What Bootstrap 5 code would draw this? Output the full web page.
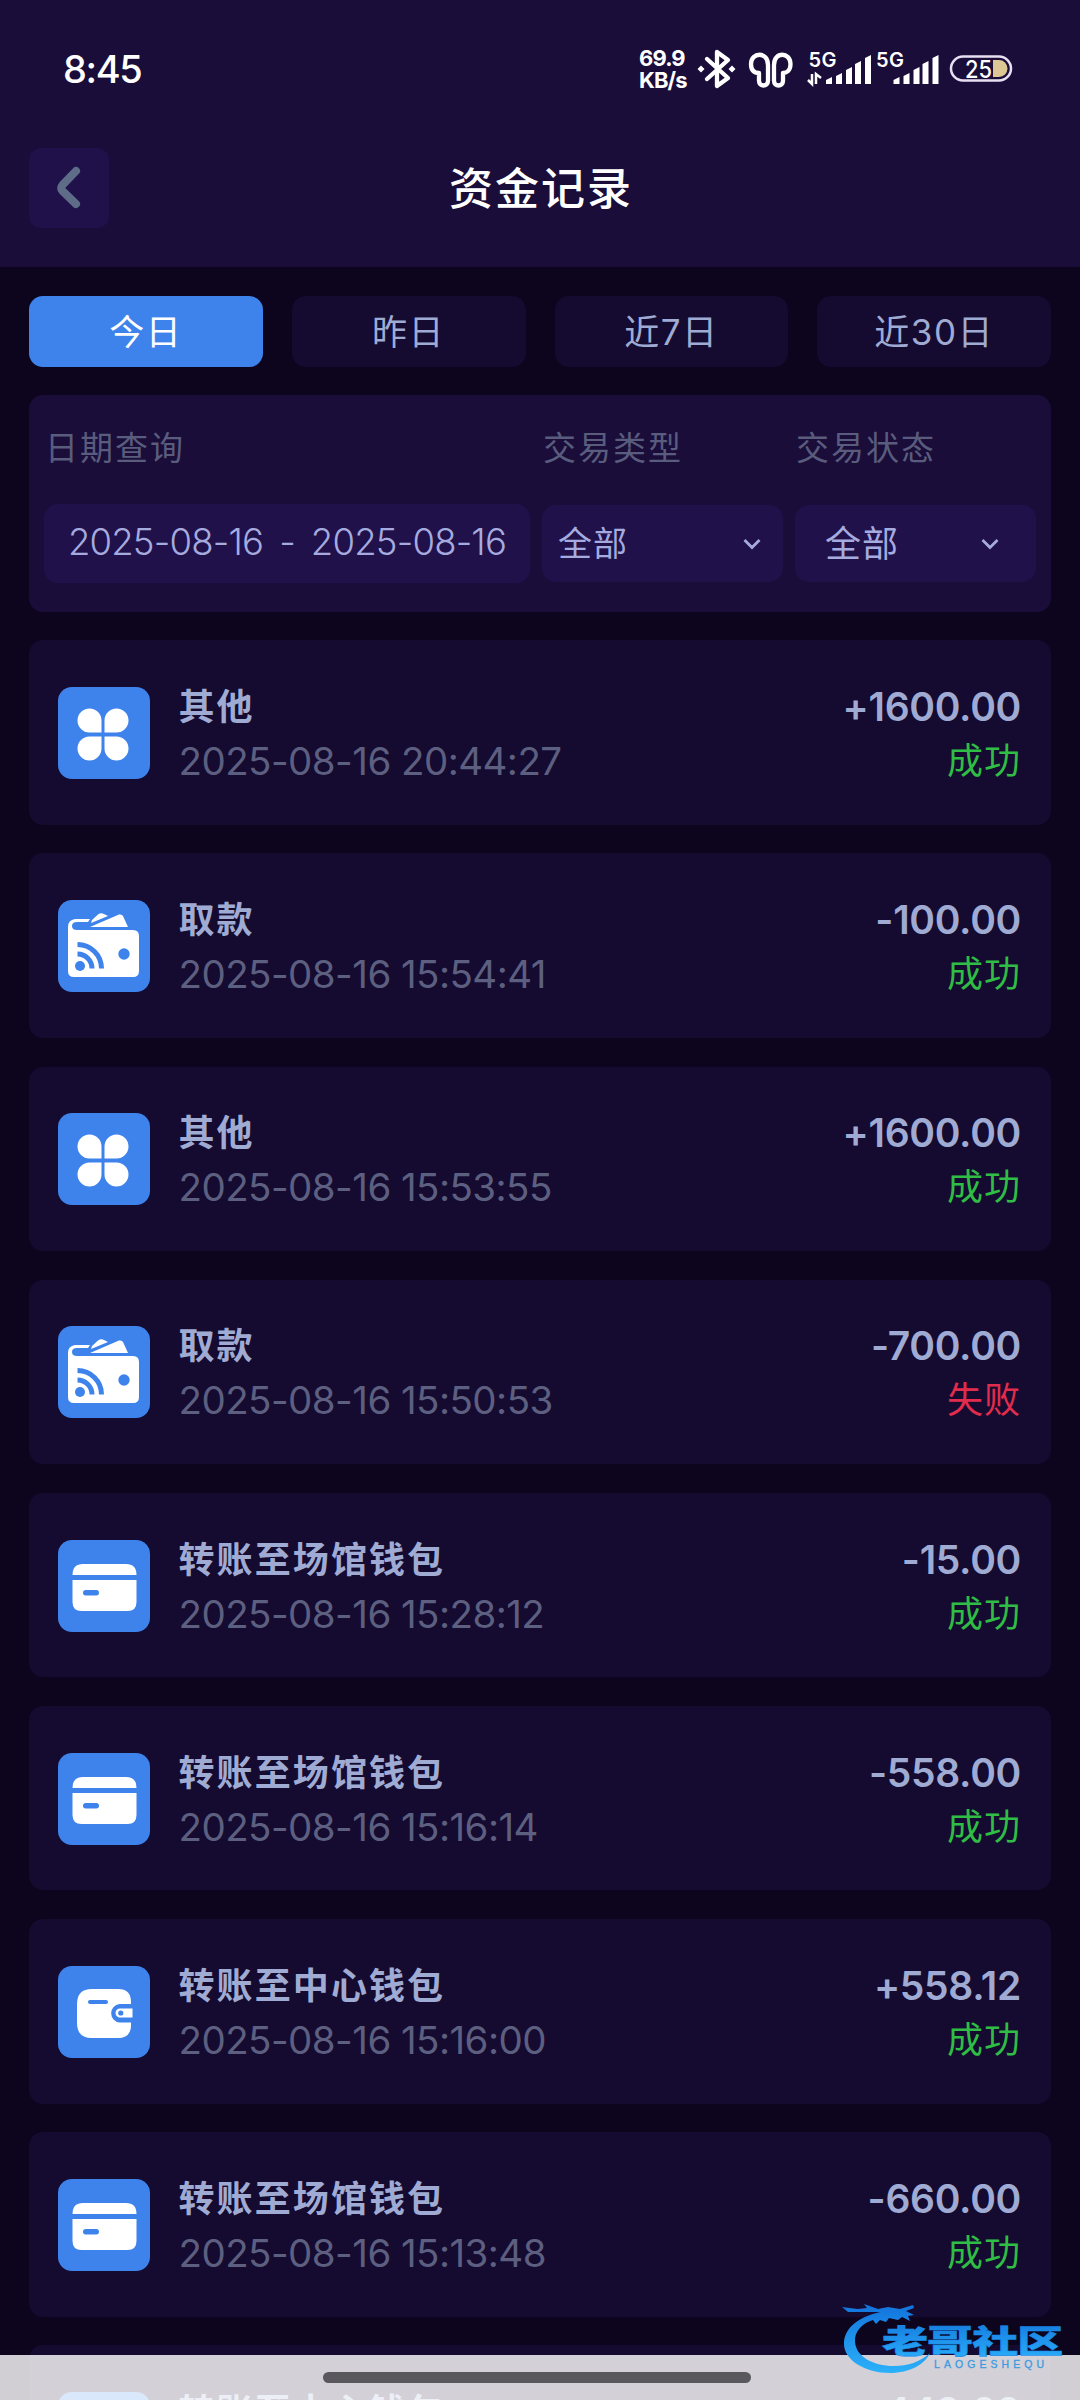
<!DOCTYPE html>
<html lang="zh-CN">
<head>
<meta charset="utf-8">
<meta name="viewport" content="width=device-width, initial-scale=1">
<title>资金记录</title>
<link href="https://cdn.jsdelivr.net/npm/bootstrap@5.3.0/dist/css/bootstrap.min.css" rel="stylesheet">
<style>
  html, body { height: 2400px; overflow: hidden; }
  body { background: #0c051d; color: #9fabd3; font-family: Inter, "Noto Sans CJK SC", sans-serif; font-size: 36px; line-height: 1; }
  .screen { width: 1080px; height: 2400px; }
  .top-area { background: #1a0d39; height: 267px; }
  .status-line { height: 138px; padding: 0 57px 0 63px; color: #fff; }
  .clock { font-size: 38px; font-weight: 500; letter-spacing: -1.4px; }
  .net-speed { font-size: 22px; line-height: 22px; font-weight: 700; letter-spacing: -.9px; width: 48px; margin-right: 8px; }
  .title-line { height: 100px; padding: 0 29px; }
  .back-btn { width: 80px; height: 80px; border-radius: 12px; background: #20114b; border: 0; left: 29px; }
  .page-title { font-size: 44px; font-weight: 500; letter-spacing: 2px; color: #fff; padding: 3px 0 0 2px; }
  .main-area { padding: 29px 29px 0; }
  .tab-btn { height: 71px; border-radius: 14px; background: #150a2f; color: #9fabd3; font-size: 35px; letter-spacing: 1.5px; flex: 1 1 0; border: 0; padding: 1px 0 0; font-weight: 400; line-height: 71px; }
  .tab-btn.active { background: #3e83ec; color: #fff; }
  .day-tabs { gap: 29px; }
  .filter-card { margin-top: 28px; height: 217px; border-radius: 14px; background: #1a0d39; padding: 37px 14px 0 15px; gap: 12px; }
  .f-label { font-size: 33px; letter-spacing: 2px; color: #595c7d; height: 33px; padding-left: 1px; }
  .f-box { margin-top: 40px; height: 77px; background: #20114b; border-radius: 14px; color: #a5abdf; font-size: 34px; letter-spacing: 1px; }
  .f-range { margin-top: 39px; height: 79px; font-size: 36.5px; font-weight: 350; letter-spacing: -.8px; gap: 16px; padding-bottom: 2px; }
  .f-date { width: 486px; }
  .f-sel { width: 241px; }
  .sel-type { padding: 0 22px 0 16px; }
  .sel-state { padding: 0 37px 0 30px; font-size: 36px; }
  .records { margin-top: 28.4px; gap: 28.5px; }
  .rec { height: 184.6px; flex: none; border-radius: 14px; background: #150a2f; padding: 1px 30px 0 28.5px; }
  .rec-icon { width: 92px; height: 92px; flex: none; }
  .rec-body { margin-left: 29px; padding-top: 2px; }
  .rec-name { font-size: 36px; font-weight: 600; letter-spacing: 2.1px; height: 54px; line-height: 55px; }
  .rec-time { font-size: 38.500px; font-weight: 370; height: 54px; line-height: 54px; color: #5c5f80; letter-spacing: -.55px; }
  .rec-side { padding-top: 2px; }
  .rec-sum { font-size: 39px; font-weight: 600; height: 54px; line-height: 54px; letter-spacing: -.3px; }
  .rec-state { font-size: 36px; letter-spacing: 1px; height: 54px; line-height: 54px; }
  .ok { color: #2fbd45; }
  .bad { color: #e22c4d; }
  .nav-veil { left: 0; top: 2355px; width: 1080px; height: 45px; background: rgba(255,255,255,.81); }
  .nav-pill { width: 428px; height: 11px; border-radius: 6px; background: #59585d; margin: 17px 0 0 323px; }
  .stamp { left: 840px; top: 2298px; }
</style>
<script src="https://cdn.jsdelivr.net/npm/bootstrap@5.3.0/dist/js/bootstrap.bundle.min.js"></script>
</head>
<body>
<svg class="position-absolute" width="0" height="0" xmlns="http://www.w3.org/2000/svg">
  <symbol id="i-clover" viewBox="0 0 92 92"><rect width="92" height="92" rx="14" fill="#3e83ec"/><path fill="#fff" d="M31.500 21.500a12 12 0 0 1 12 12V45.500H31.500a12 12 0 0 1 0-24ZM58.500 21.500a12 12 0 0 1 0 24H46.500V33.500a12 12 0 0 1 12-12ZM31.500 49.500H43.500V61.500a12 12 0 1 1-12-12ZM46.500 49.500H58.500a12 12 0 1 1-12 12Z"/></symbol>
  <symbol id="i-draw" viewBox="0 0 92 92"><rect width="92" height="92" rx="14" fill="#3e83ec"/><path fill="#fff" d="M18 30H75Q81 30 81 36V71Q81 77 75 77H16Q10 77 10 71V27Q10 20 17 19H32L30 22H19Q14 22 14 26 14 30 19 30Z"/><path fill="#fff" d="M32 27 61 14.500Q64 14 65 16L70 27ZM34 20 40 14.500Q43 12.500 46 14L50 16 33 23Z"/><g fill="none" stroke="#3e83ec" stroke-width="5"><path d="M19.500 44.500A24 24 0 0 1 43.500 68.500M19.500 54A14.500 14.500 0 0 1 34 68.500"/></g><circle cx="22" cy="66" r="5" fill="#3e83ec"/><circle cx="66" cy="54" r="5.700" fill="#3e83ec"/></symbol>
  <symbol id="i-card" viewBox="0 0 92 92"><rect width="92" height="92" rx="14" fill="#3e83ec"/><path fill="#fff" d="M14.500 35Q14.500 24 25 24H68Q78.500 24 78.500 35ZM14.500 40H78.500V62Q78.500 71 69.500 71H23.500Q14.500 71 14.500 62Z"/><rect x="25" y="50" width="16" height="5.500" rx="2.700" fill="#3e83ec"/></symbol>
  <symbol id="i-purse" viewBox="0 0 92 92"><rect width="92" height="92" rx="14" fill="#3e83ec"/><path fill="#fff" d="M34 23H60Q73 23 73 36V38H61.500A9.300 9.300 0 0 0 61.500 56.500H73V59Q73 72 60 72H34Q19 72 19 57V38Q19 23 34 23ZM62 42.500H74.500V51.500H62A4.500 4.500 0 0 1 62 42.500Z"/><rect x="30" y="34" width="20" height="4" rx="2" fill="#3e83ec"/><circle cx="62.800" cy="47" r="2.600" fill="#3e83ec"/></symbol>
  <symbol id="i-down" viewBox="0 0 18 12"><path d="M1.500 2 9 9.500 16.500 2" fill="none" stroke="#a5abdf" stroke-width="2.800"/></symbol>
</svg>
<div class="screen position-relative overflow-hidden">
  <header class="top-area">
    <div class="status-line d-flex align-items-center justify-content-between">
      <span class="clock">8:45</span>
      <div class="d-flex align-items-center">
        <div class="net-speed">69.9<br>KB/s</div>
        <svg width="328" height="52" viewBox="0 0 328 52">
          <g fill="none" stroke="#fff" stroke-width="4.300" stroke-linejoin="round" stroke-linecap="round">
            <path d="M12 16 33 35 22 43V9L33 17 12 36"/>
            <path d="M73 38V22C73 8 56 9 56 21 56 28 60 30 64 30V38C64 44 73 44 73 38ZM79 38V22C79 8 95.500 9 95.500 21 95.500 28 91 30 88 30V38C88 44 79 44 79 38Z"/>
          </g>
          <path fill="#fff" d="M6 22.500 9.500 26 6 29.500 2.500 26ZM37 22.500 40.500 26 37 29.500 33.500 26Z"/>
          <g fill="#fff" font-family="Inter" font-weight="600" font-size="20"><text x="113.500" y="24" textLength="28">5G</text><text x="181" y="24" textLength="28">5G</text></g>
          <path id="bars" fill="#fff" d="M131 41V37L137 34V41ZM141 41V33L147 30V41ZM151 41V27L157 24V41ZM160 41V21L166 18V41ZM170 41V15L176 12V41Z"/>
          <use href="#bars" x="67.500"/>
          <path d="M117 31V41L113 37M121 41V31L126 35" stroke="#fff" stroke-width="2.500" fill="none"/>
          <rect x="256" y="13.500" width="60" height="24" rx="12" fill="none" stroke="#e7e0f2" stroke-width="2.500"/>
          <path d="M298 17H304A8.500 8.500 0 0 1 304 34H298Z" fill="#dcc795"/>
          <text x="270" y="34.800" fill="#fff" font-family="Inter" font-size="24" font-weight="500" textLength="27" lengthAdjust="spacingAndGlyphs">25</text>
        </svg>
      </div>
    </div>
    <div class="title-line d-flex align-items-center justify-content-center position-relative">
      <button class="btn back-btn p-0 position-absolute" aria-label="返回"><svg width="24" height="44" viewBox="0 0 24 44"><path d="M18 5 4.500 19Q2 22 4.500 25L18 38" transform="translate(1 0)" fill="none" stroke="#5e6c88" stroke-width="8" stroke-linecap="round"/></svg></button>
      <h1 class="page-title m-0">资金记录</h1>
    </div>
  </header>
  <main class="main-area">
    <div class="day-tabs d-flex">
      <button class="btn tab-btn active">今日</button><button class="btn tab-btn">昨日</button><button class="btn tab-btn">近7日</button><button class="btn tab-btn">近30日</button>
    </div>
    <section class="filter-card d-flex">
      <div class="f-date"><div class="f-label">日期查询</div><div class="f-box f-range d-flex align-items-center justify-content-center"><span>2025-08-16</span><span>-</span><span>2025-08-16</span></div></div>
      <div class="f-sel"><div class="f-label">交易类型</div><div class="f-box sel-type d-flex align-items-center justify-content-between"><span>全部</span><svg width="18" height="12"><use href="#i-down"/></svg></div></div>
      <div class="f-sel"><div class="f-label">交易状态</div><div class="f-box sel-state d-flex align-items-center justify-content-between"><span>全部</span><svg width="18" height="12"><use href="#i-down"/></svg></div></div>
    </section>
    <section class="records d-flex flex-column">
      <article class="rec d-flex align-items-center"><svg class="rec-icon"><use href="#i-clover"/></svg><div class="rec-body flex-grow-1"><div class="rec-name">其他</div><div class="rec-time">2025-08-16 20:44:27</div></div><div class="rec-side text-end"><div class="rec-sum">+1600.00</div><div class="rec-state ok">成功</div></div></article>
      <article class="rec d-flex align-items-center"><svg class="rec-icon"><use href="#i-draw"/></svg><div class="rec-body flex-grow-1"><div class="rec-name">取款</div><div class="rec-time">2025-08-16 15:54:41</div></div><div class="rec-side text-end"><div class="rec-sum">-100.00</div><div class="rec-state ok">成功</div></div></article>
      <article class="rec d-flex align-items-center"><svg class="rec-icon"><use href="#i-clover"/></svg><div class="rec-body flex-grow-1"><div class="rec-name">其他</div><div class="rec-time">2025-08-16 15:53:55</div></div><div class="rec-side text-end"><div class="rec-sum">+1600.00</div><div class="rec-state ok">成功</div></div></article>
      <article class="rec d-flex align-items-center"><svg class="rec-icon"><use href="#i-draw"/></svg><div class="rec-body flex-grow-1"><div class="rec-name">取款</div><div class="rec-time">2025-08-16 15:50:53</div></div><div class="rec-side text-end"><div class="rec-sum">-700.00</div><div class="rec-state bad">失败</div></div></article>
      <article class="rec d-flex align-items-center"><svg class="rec-icon"><use href="#i-card"/></svg><div class="rec-body flex-grow-1"><div class="rec-name">转账至场馆钱包</div><div class="rec-time">2025-08-16 15:28:12</div></div><div class="rec-side text-end"><div class="rec-sum">-15.00</div><div class="rec-state ok">成功</div></div></article>
      <article class="rec d-flex align-items-center"><svg class="rec-icon"><use href="#i-card"/></svg><div class="rec-body flex-grow-1"><div class="rec-name">转账至场馆钱包</div><div class="rec-time">2025-08-16 15:16:14</div></div><div class="rec-side text-end"><div class="rec-sum">-558.00</div><div class="rec-state ok">成功</div></div></article>
      <article class="rec d-flex align-items-center"><svg class="rec-icon"><use href="#i-purse"/></svg><div class="rec-body flex-grow-1"><div class="rec-name">转账至中心钱包</div><div class="rec-time">2025-08-16 15:16:00</div></div><div class="rec-side text-end"><div class="rec-sum">+558.12</div><div class="rec-state ok">成功</div></div></article>
      <article class="rec d-flex align-items-center"><svg class="rec-icon"><use href="#i-card"/></svg><div class="rec-body flex-grow-1"><div class="rec-name">转账至场馆钱包</div><div class="rec-time">2025-08-16 15:13:48</div></div><div class="rec-side text-end"><div class="rec-sum">-660.00</div><div class="rec-state ok">成功</div></div></article>
      <article class="rec d-flex align-items-center"><svg class="rec-icon"><use href="#i-purse"/></svg><div class="rec-body flex-grow-1"><div class="rec-name">转账至中心钱包</div><div class="rec-time"></div></div><div class="rec-side text-end"><div class="rec-sum">+442.60</div><div class="rec-state"></div></div></article>
    </section>
  </main>
  <div class="nav-veil position-absolute"><div class="nav-pill"></div></div>
  <svg class="stamp position-absolute" width="240" height="86" viewBox="0 0 240 86">
    <defs><linearGradient id="sea" x1="0" y1="0" x2="0" y2="1"><stop offset="0" stop-color="#1273dc"/><stop offset="1" stop-color="#2bb1fa"/></linearGradient></defs>
    <path fill="url(#sea)" d="M40 14C15 20 4 32 4 46 4 62 25 75 50 75 70 75 85 66 90 55 80 64 68 68 54 68 32 68 16 58 15 44 14 34 22 25 33 22L36 26 40 22 46 24 49 20 58 22 62 19 70 23 68 18 74 17 66 13 74 10 73 7 60 11 48 9 38 11 24 6 27 10 18 11 2 9 8 14 26 14Z"/>
    <text transform="translate(42 55) scale(1.440 1)" font-family="'Noto Sans CJK SC'" font-weight="900" font-size="32" fill="url(#sea)" stroke="#1b8deb" stroke-width=".6" textLength="126">老哥社区</text>
    <text x="94" y="69.500" font-family="'Liberation Sans'" font-size="10.500" fill="#3d9be0" stroke="#3d9be0" stroke-width=".3" textLength="110">LAOGESHEQU</text>
  </svg>
</div>
</body>
</html>
